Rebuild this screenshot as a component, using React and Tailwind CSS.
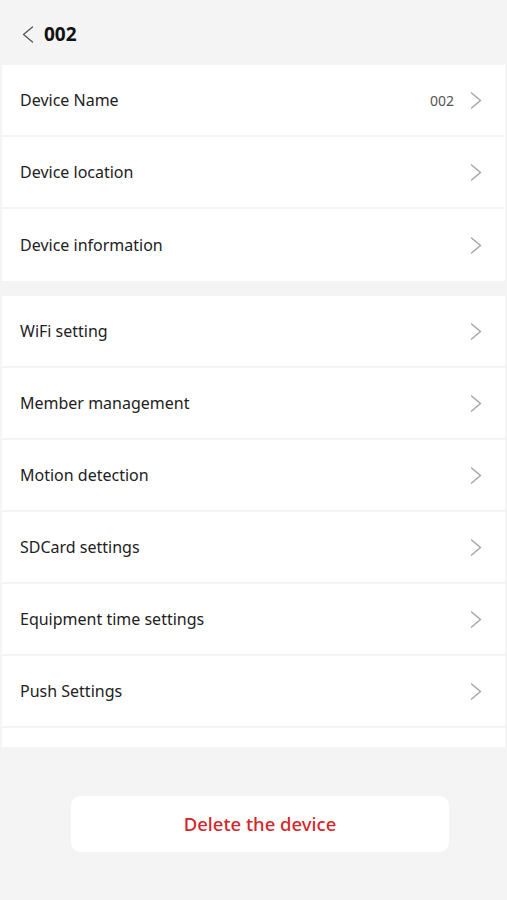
const GROUP_ONE = [
  { label: 'Device Name', value: '002' },
  { label: 'Device location' },
  { label: 'Device information' },
];

const GROUP_TWO = [
  { label: 'WiFi setting' },
  { label: 'Member management' },
  { label: 'Motion detection' },
  { label: 'SDCard settings' },
  { label: 'Equipment time settings' },
  { label: 'Push Settings' },
];

function Arrow({ left, className }) {
  return (
    <svg width="12" height="17" viewBox="0 0 12 17" fill="none" className={className}>
      <polyline
        points={left ? '10.5,1 1.5,8.5 10.5,16' : '1.5,1 10.5,8.5 1.5,16'}
        stroke="currentColor"
        strokeWidth="1.3"
        strokeLinecap="round"
        strokeLinejoin="round"
      />
    </svg>
  );
}

function Row({ label, value, last }) {
  return (
    <div className={`flex items-center h-[72px] pl-[18px] pr-[23px] ${last ? '' : 'border-b-2 border-[#f4f4f4]'}`}>
      <span className="flex-1 text-[16px] text-[#222]">{label}</span>
      {value && <span className="text-[14px] text-[#555] mr-[16px]">{value}</span>}
      <Arrow className="text-[#a0a0a0]" />
    </div>
  );
}

export default function App() {
  return (
    <main
      className="w-[507px] h-[900px] bg-[#f4f4f4] flex flex-col overflow-hidden"
      style={{ fontFamily: '"Noto Sans", Roboto, sans-serif' }}
    >
      {/* header */}
      <header className="h-[65px] flex items-center pl-[22px] pt-[3px]">
        <Arrow left className="text-[#555]" />
        <h1 className="ml-[10px] text-[19px] font-bold text-[#111]">002</h1>
      </header>

      <section className="mx-[2px] bg-white">
        {GROUP_ONE.map((item, i) => (
          <Row key={item.label} {...item} last={i === GROUP_ONE.length - 1} />
        ))}
      </section>

      <section className="mx-[2px] mt-[15px] bg-white pb-[19px]">
        {GROUP_TWO.map((item) => (
          <Row key={item.label} {...item} />
        ))}
      </section>

      <div className="flex justify-center mt-[49px]">
        <button className="w-[378px] h-[56px] ml-[13px] bg-white rounded-[9px] text-[#d4262b] text-[18.5px] font-medium">
          Delete the device
        </button>
      </div>
    </main>
  );
}
